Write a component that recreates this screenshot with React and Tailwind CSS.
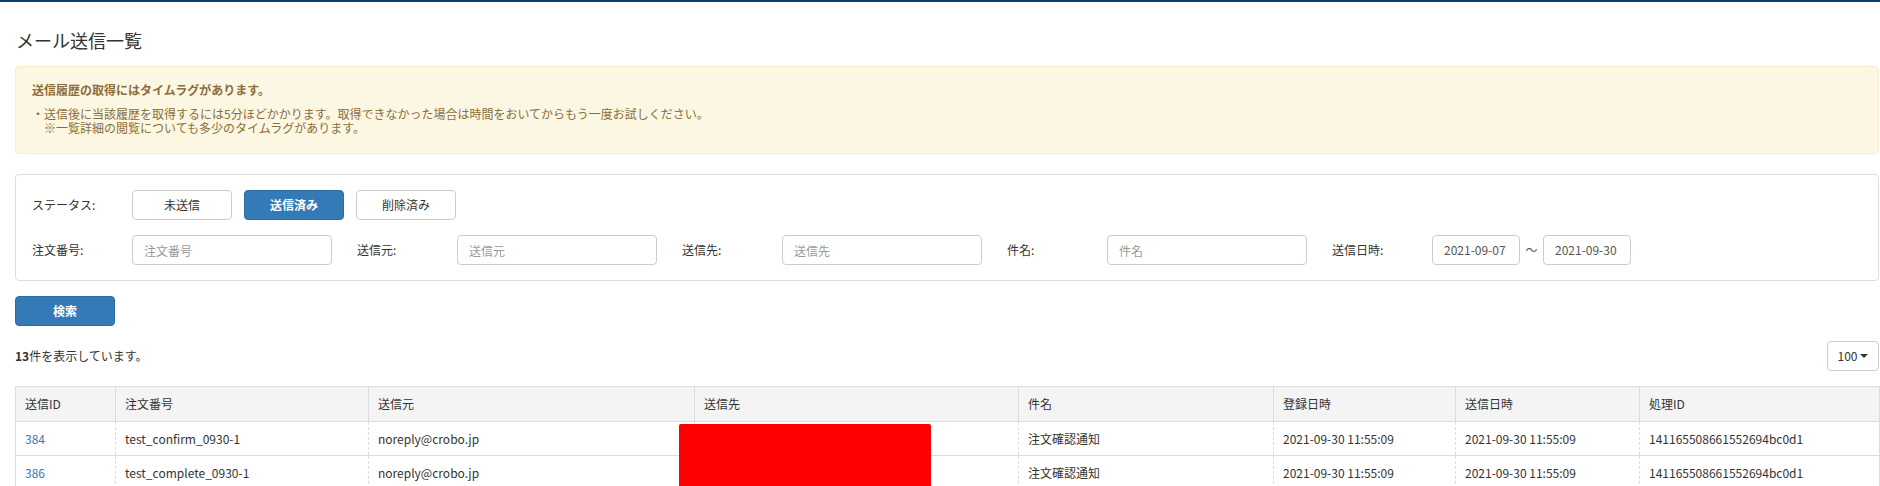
import React from "react";

const cols = [
  { label: "送信ID", w: 100 },
  { label: "注文番号", w: 253 },
  { label: "送信元", w: 326 },
  { label: "送信先", w: 324 },
  { label: "件名", w: 255 },
  { label: "登録日時", w: 182 },
  { label: "送信日時", w: 184 },
  { label: "処理ID", w: 240 },
];

const rows = [
  ["384", "test_confirm_0930-1", "noreply@crobo.jp", "", "注文確認通知", "2021-09-30 11:55:09", "2021-09-30 11:55:09", "141165508661552694bc0d1"],
  ["386", "test_complete_0930-1", "noreply@crobo.jp", "", "注文確認通知", "2021-09-30 11:55:09", "2021-09-30 11:55:09", "141165508661552694bc0d1"],
];

function Field({ label, placeholder }) {
  return (
    <div className="flex items-center">
      <div className="w-[100px] shrink-0">{label}</div>
      <input
        className="w-[200px] h-[30px] border border-[#ccc] rounded-[4px] px-[11px] text-[12px] text-[#555] placeholder:text-[#999] outline-none bg-white"
        placeholder={placeholder}
      />
    </div>
  );
}

export default function App() {
  return (
    <div className="font-['Noto_Sans_CJK_JP','Noto_Sans',sans-serif] text-[12px] text-[#333] bg-white min-h-[486px]">
      <div className="h-[2px] bg-[#0b3d6c]" />
      <div className="pl-[15px] pr-[1px]">
        <h1 className="mt-[26px] mb-[14px] text-[18px] leading-[24px] font-normal text-[#333] pl-[1px]">メール送信一覧</h1>

        <div className="border border-[#faebcc] bg-[#fcf7e3] rounded-[4px] pl-[16px] pt-[15px] pb-[18px] text-[#8a6d3b]">
          <div className="font-bold leading-[16px]">送信履歴の取得にはタイムラグがあります。</div>
          <div className="mt-[9px] leading-[14px]">
            <div>・送信後に当該履歴を取得するには5分ほどかかります。取得できなかった場合は時間をおいてからもう一度お試しください。</div>
            <div className="pl-[12px]">※一覧詳細の閲覧についても多少のタイムラグがあります。</div>
          </div>
        </div>

        <div className="mt-[20px] border border-[#ddd] rounded-[4px] pl-[16px] py-[15px] flex flex-col gap-[15px]">
          <div className="flex items-center h-[30px]">
            <div className="w-[100px] shrink-0">ステータス:</div>
            <div className="flex gap-[12px]">
              <button className="w-[100px] h-[30px] border border-[#ccc] rounded-[4px] bg-white text-[#333]">未送信</button>
              <button className="w-[100px] h-[30px] border border-[#2e6da4] rounded-[4px] bg-[#337ab7] text-white font-bold">送信済み</button>
              <button className="w-[100px] h-[30px] border border-[#ccc] rounded-[4px] bg-white text-[#333]">削除済み</button>
            </div>
          </div>
          <div className="flex items-center h-[30px] gap-[25px]">
            <Field label="注文番号:" placeholder="注文番号" />
            <Field label="送信元:" placeholder="送信元" />
            <Field label="送信先:" placeholder="送信先" />
            <Field label="件名:" placeholder="件名" />
            <div className="flex items-center">
              <div className="w-[100px] shrink-0">送信日時:</div>
              <div className="w-[88px] h-[30px] border border-[#ccc] rounded-[4px] px-[11px] flex items-center text-[#555]">2021-09-07</div>
              <div className="w-[23px] text-center text-[#555]">〜</div>
              <div className="w-[88px] h-[30px] border border-[#ccc] rounded-[4px] px-[11px] flex items-center text-[#555]">2021-09-30</div>
            </div>
          </div>
        </div>

        <button className="mt-[15px] w-[100px] h-[30px] rounded-[4px] bg-[#337ab7] border border-[#2e6da4] text-white font-bold">検索</button>

        <div className="mt-[15px] h-[30px] flex items-center justify-between">
          <div><span className="font-bold">13</span>件を表示しています。</div>
          <div className="w-[52px] h-[30px] border border-[#ccc] rounded-[4px] flex items-center justify-center gap-[3px] bg-white">
            <span>100</span>
            <span className="inline-block w-0 h-0 border-t-[4px] border-t-[#333] border-x-[4px] border-x-transparent" />
          </div>
        </div>

        <div className="relative mt-[15px] w-[1864px]">
          <table className="w-[1864px] table-fixed border-collapse">
            <colgroup>
              {cols.map((c) => (
                <col key={c.label} style={{ width: c.w }} />
              ))}
            </colgroup>
            <thead>
              <tr className="bg-[#f4f4f4]">
                {cols.map((c) => (
                  <th key={c.label} className="h-[35px] border border-[#ddd] px-[9px] text-left font-normal">
                    {c.label}
                  </th>
                ))}
              </tr>
            </thead>
            <tbody>
              {rows.map((r, i) => (
                <tr key={i}>
                  {r.map((v, j) => (
                    <td
                      key={j}
                      className={
                        "h-[34px] border border-[#ddd] [border-left-style:dashed] [border-right-style:dashed] [border-top-style:solid] [border-bottom-style:solid] px-[9px] " +
                        (j === 0 ? "text-[#337ab7] [border-left-style:solid]" : "") +
                        (j === r.length - 1 ? " [border-right-style:solid]" : "")
                      }
                    >
                      {v}
                    </td>
                  ))}
                </tr>
              ))}
            </tbody>
          </table>
          <div className="absolute left-[664px] top-[38px] w-[252px] h-[80px] bg-[#ff0000] rounded-[2px]" />
        </div>
      </div>
    </div>
  );
}
